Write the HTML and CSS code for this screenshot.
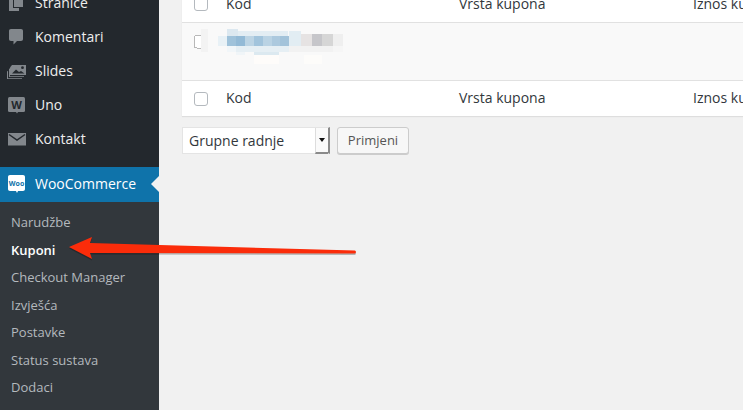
FILE: index.html

```html
<!DOCTYPE html>
<html>
<head>
    <meta charset="UTF-8">
    <meta name="viewport" content="width=device-width, initial-scale=1.0">
    <title>Kuponi</title>
    <link rel="stylesheet" href="styles.css">
</head>
<body>
    <div class="wrap">
        <div class="sidebar">
            <ul class="menu">
                <li>
                    <svg class="icon" viewBox="0 0 20 20"><path d="M7 1h9v13H7z" fill="#82878c"/><path d="M2 5h4v10h6v3H2z" fill="#82878c"/></svg>
                    <span class="label">Stranice</span>
                </li>
                <li>
                    <svg class="icon" viewBox="0 0 20 20"><path d="M4 2h10c1.300 0 2 .8 2 2v8c0 1.200-.7 2-2 2h-4l-3.500 3.500V14H4c-1.300 0-2-.8-2-2V4c0-1.200.7-2 2-2z" fill="#82878c"/></svg>
                    <span class="label">Komentari</span>
                </li>
                <li>
                    <svg class="icon" viewBox="0 0 20 20"><path d="M5 4h14v10H3V6.500z" fill="#82878c"/><circle cx="15.500" cy="6.700" r="1.400" fill="#23282d"/><path d="M5 12.500l4-4 3 2.500 2-1 3.500 2.500z" fill="#23282d"/><path d="M2 8v8h15v-.8H3V7.200zM0 10.500V18h15v-.8H1V9.700z" fill="#82878c"/></svg>
                    <span class="label">Slides</span>
                </li>
                <li>
                    <svg class="icon" viewBox="0 0 20 20"><rect x="1" y="2" width="17" height="15" rx="1.500" fill="#82878c"/><path d="M9 17h2l-1 1.500z" fill="#82878c"/><text x="9.500" y="14" class="icon-w">W</text></svg>
                    <span class="label">Uno</span>
                </li>
                <li>
                    <svg class="icon" viewBox="0 0 20 20"><rect x="1" y="4" width="18" height="12.500" fill="#82878c"/><path d="M2 5.500l8 5.500 8-5.500" fill="none" stroke="#23282d" stroke-width="1.500"/></svg>
                    <span class="label">Kontakt</span>
                </li>
                <li class="current">
                    <svg class="icon" viewBox="0 0 20 20"><path d="M3 0h13c1.200 0 2 .8 2 2v12c0 1.200-.8 2-2 2h-5l-1 2-1-2H3c-1.200 0-2-.8-2-2V2c0-1.200.8-2 2-2z" fill="#fff"/><text x="9.500" y="10.500" class="icon-woo">Woo</text></svg>
                    <span class="label">WooCommerce</span>
                </li>
            </ul>
            <ul class="submenu">
                <li>Narudžbe</li>
                <li class="active">Kuponi</li>
                <li>Checkout Manager</li>
                <li>Izvješća</li>
                <li>Postavke</li>
                <li>Status sustava</li>
                <li>Dodaci</li>
            </ul>
        </div>

        <div class="content">
            <div class="coupons">
                <div class="row head">
                    <span class="check"></span>
                    <span>Kod</span>
                    <span>Vrsta kupona</span>
                    <span>Iznos kupona</span>
                </div>
                <div class="row blurred">
                    <!-- coupon code pixelated in the screenshot -->
                    <svg class="mosaic" width="160" height="40" viewBox="0 0 160 40" shape-rendering="crispEdges">
                        <rect x="7" y="0" width="7" height="23" fill="#f3f3f3"/>
                        <path d="M7 6.500H2.500Q.5 6.500 .5 8.500V17Q.5 19 2.500 19H7" fill="#fff" stroke="#b8b8b8"/>
                        <rect x="24" y="7" width="9" height="10" fill="#e8f1f6"/>
                        <rect x="33" y="0" width="11" height="7" fill="#dce8f0"/>
                        <rect x="44" y="2" width="50" height="5" fill="#e3edf3"/>
                        <rect x="33" y="7" width="9" height="10" fill="#9fc2da"/>
                        <rect x="42" y="7" width="9" height="10" fill="#93bad6"/>
                        <rect x="51" y="7" width="9" height="10" fill="#bcd4e4"/>
                        <rect x="60" y="7" width="9" height="10" fill="#a2c4dc"/>
                        <rect x="69" y="7" width="9" height="10" fill="#bad3e4"/>
                        <rect x="78" y="7" width="8" height="10" fill="#acc9de"/>
                        <rect x="86" y="7" width="9" height="10" fill="#a3c3da"/>
                        <rect x="95" y="2" width="12" height="15" fill="#e2edf3"/>
                        <rect x="107" y="5" width="11" height="12" fill="#e6e3e3"/>
                        <rect x="118" y="5" width="10" height="12" fill="#c6c6ca"/>
                        <rect x="128" y="5" width="11" height="12" fill="#d6d6d6"/>
                        <rect x="139" y="5" width="10" height="12" fill="#efefef"/>
                        <rect x="33" y="17" width="9" height="6" fill="#f1f6f9"/>
                        <rect x="42" y="17" width="53" height="6" fill="#e6eff4"/>
                        <rect x="95" y="17" width="44" height="6" fill="#f2f2f2"/>
                        <rect x="139" y="17" width="10" height="6" fill="#f6f6f6"/>
                        <rect x="42" y="23" width="9" height="3" fill="#f0f5f8"/>
                        <rect x="60" y="23" width="25" height="3" fill="#dce9f0"/>
                        <rect x="60" y="26" width="25" height="9" fill="#fefcfa"/>
                        <rect x="110" y="26" width="18" height="9" fill="#fdfcfa"/>
                    </svg>
                </div>
                <div class="row foot">
                    <span class="check"></span>
                    <span>Kod</span>
                    <span>Vrsta kupona</span>
                    <span>Iznos kupona</span>
                </div>
            </div>
            <div class="actions">
                <div class="select">
                    <span class="select-label">Grupne radnje</span>
                    <span class="select-arrow"></span>
                </div>
                <div class="button">Primjeni</div>
            </div>
        </div>
    </div>

    <!-- red arrow pasted over the screenshot -->
    <svg class="arrow" width="743" height="410" viewBox="0 0 743 410">
        <path d="M69 247L92 237L90 243L355 250.500Q357 252 355 253.500L90 253L92 259z" fill="#000" opacity=".25" transform="translate(0 1.500)"/>
        <path d="M69 247L92 237L90 243L355 250.500Q357 252 355 253.500L90 253L92 259z" fill="#fb2c0a"/>
    </svg>
</body>
</html>
```

FILE: styles.css

```css
body {
    margin: 0;
    background-color: #f1f1f1;
    font-family: "Open Sans", sans-serif;
    overflow: hidden;
}

.wrap {
    display: flex;
    height: 410px;
    overflow: hidden;
}

/* left menu */
.sidebar {
    width: 159px;
    flex-shrink: 0;
    background-color: #23282d;
}

.menu, .submenu {
    list-style-type: none;
    margin: 0;
    padding: 0;
}

.menu {
    margin-top: -14px;
}

.menu li {
    display: flex;
    align-items: center;
    gap: 8px;
    height: 34px;
    padding-left: 7px;
    font-size: 14px;
    color: #eee;
}

.label {
    position: relative;
    top: -1px;
}

.menu .current {
    position: relative;
    height: 35px;
    margin-top: 11px;
    background-color: #0f73aa;
    color: #fff;
}

.current::after {
    content: "";
    position: absolute;
    right: 0;
    top: 9px;
    border: 8px solid transparent;
    border-left-width: 0;
    border-right-color: #f1f1f1;
}

.icon {
    width: 20px;
    height: 20px;
    flex-shrink: 0;
}

.icon-w {
    font-family: "Open Sans", sans-serif;
    font-size: 11px;
    font-weight: 700;
    text-anchor: middle;
    fill: #23282d;
}

.icon-woo {
    font-family: "Open Sans", sans-serif;
    font-size: 7px;
    font-weight: 700;
    text-anchor: middle;
    fill: #0f73aa;
}

.submenu {
    height: 208px;
    padding-top: 7px;
    background-color: #32373c;
}

.submenu li {
    height: 27.5px;
    line-height: 27px;
    padding-left: 11px;
    font-size: 13px;
    color: #b4b9be;
}

.submenu .active {
    font-weight: 600;
    color: #fff;
}

/* coupons table */
.content {
    flex: 1;
    min-width: 0;
    padding-left: 23px;
}

.coupons {
    width: 700px;
    margin-top: -14px;
    background-color: #fff;
    box-shadow: 0 1px 1px rgba(0, 0, 0, 0.08);
}

.row {
    display: grid;
    grid-template-columns: 44px 233px 234px 188px;
    align-items: center;
    font-size: 14px;
    color: #32373c;
    white-space: nowrap;
}

.row span:not(.check) {
    position: relative;
    top: -1px;
}

.head {
    height: 36px;
    border-bottom: 1px solid #e1e1e1;
}

.blurred {
    display: block;
    box-sizing: border-box;
    height: 58px;
    padding: 6px 0 0 12px;
    background-color: #f9f9f9;
    border-bottom: 1px solid #e1e1e1;
    overflow: hidden;
}

.foot {
    height: 35px;
}

.mosaic {
    display: block;
}

.check {
    display: block;
    width: 12px;
    height: 12px;
    margin-left: 12px;
    background-color: #fff;
    border: 1px solid #b4b9be;
    border-radius: 3px;
}

/* bulk actions */
.actions {
    display: flex;
    gap: 7px;
    margin-top: 11px;
}

.select {
    display: flex;
    justify-content: space-between;
    box-sizing: border-box;
    width: 148px;
    height: 27px;
    background-color: #fff;
    border: 1px solid #e4e4e4;
    border-right: 2px solid #8a8a8a;
    font-size: 14px;
    line-height: 25px;
    color: #32373c;
}

.select-label {
    padding-left: 6px;
}

.select-arrow {
    position: relative;
    width: 12px;
    background-color: #fafafa;
    border-left: 1px solid #ddd;
    border-bottom: 2px solid #8a8a8a;
    margin-bottom: -1px;
}

.select-arrow::after {
    content: "";
    position: absolute;
    left: 3px;
    top: 10px;
    border: 3px solid transparent;
    border-top: 4px solid #111;
    border-bottom-width: 0;
}

.button {
    box-sizing: border-box;
    width: 72px;
    height: 27px;
    background-color: #f7f7f7;
    border: 1px solid #ccc;
    border-radius: 3px;
    box-shadow: 0 1px 0 #ccc;
    text-align: center;
    font-size: 13px;
    line-height: 25px;
    color: #555;
}

.arrow {
    position: absolute;
    left: 0;
    top: 0;
}
```
